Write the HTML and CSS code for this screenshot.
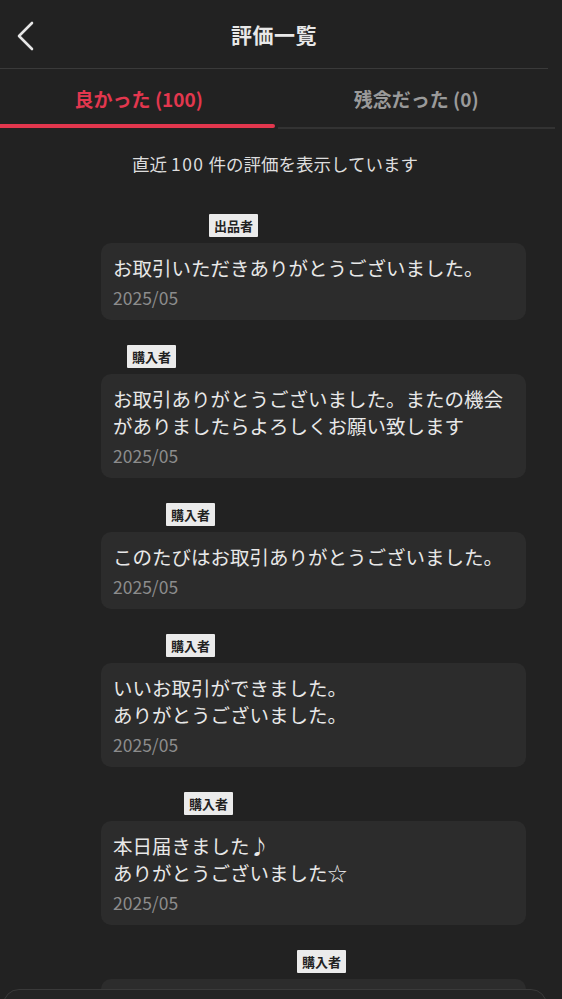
FILE: index.html
```html
<!DOCTYPE html>
<html lang="ja">
<head>
    <meta charset="UTF-8">
    <meta name="viewport" content="width=device-width, initial-scale=1.0">
    <title>評価一覧</title>
    <link rel="stylesheet" href="styles.css">
</head>
<body>

<header class="top-bar">
    <button class="back-btn" aria-label="戻る">
        <svg width="20" height="30" viewBox="0 0 20 30"><polyline points="16,2 3,15 16,28" fill="none" stroke="#e6e6e6" stroke-width="2.6" stroke-linecap="round" stroke-linejoin="round"/></svg>
    </button>
    <h1>評価一覧</h1>
</header>

<nav class="tabs">
    <div class="tab active">良かった (100)</div>
    <div class="tab">残念だった (0)</div>
</nav>

<p class="note">直近<span class="num">100</span>件の評価を表示しています</p>

<div class="review-list">
    <div class="review" style="--offset: 108px">
        <span class="badge">出品者</span>
        <div class="card">
            <p class="msg">お取引いただきありがとうございました。</p>
            <p class="date">2025/05</p>
        </div>
    </div>
    <div class="review" style="--offset: 26px">
        <span class="badge">購入者</span>
        <div class="card">
            <p class="msg">お取引ありがとうございました。またの機会がありましたらよろしくお願い致します</p>
            <p class="date">2025/05</p>
        </div>
    </div>
    <div class="review" style="--offset: 65px">
        <span class="badge">購入者</span>
        <div class="card">
            <p class="msg">このたびはお取引ありがとうございました。</p>
            <p class="date">2025/05</p>
        </div>
    </div>
    <div class="review" style="--offset: 65px">
        <span class="badge">購入者</span>
        <div class="card">
            <p class="msg">いいお取引ができました。<br>ありがとうございました。</p>
            <p class="date">2025/05</p>
        </div>
    </div>
    <div class="review" style="--offset: 83px">
        <span class="badge">購入者</span>
        <div class="card">
            <p class="msg">本日届きました♪<br>ありがとうございました☆</p>
            <p class="date">2025/05</p>
        </div>
    </div>
    <div class="review" style="--offset: 196px">
        <span class="badge">購入者</span>
        <div class="card card-empty"></div>
    </div>
</div>

<div class="bottom-sheet"></div>

</body>
</html>
```

FILE: styles.css
```css
body {
    margin: 0;
    background-color: #222222;
    color: #e6e6e6;
    font-family: "Noto Sans CJK JP", "Noto Sans", sans-serif;
    overflow: hidden;
}
.top-bar {
    position: relative;
    height: 68px;
    margin-right: 14px;
    display: flex;
    align-items: center;
    justify-content: center;
    border-bottom: 1px solid #3a3a3a;
}
.top-bar h1 {
    margin: 0;
    font-size: 21px;
    font-weight: 700;
    color: #e8e8e8;
    letter-spacing: 0.5px;
}
.back-btn {
    position: absolute;
    left: 16px;
    top: 21px;
    padding: 0;
    border: none;
    background: none;
    cursor: pointer;
}
.tabs {
    display: flex;
    margin-right: 7px;
}
.tab {
    flex: 1;
    height: 60px;
    display: flex;
    align-items: center;
    justify-content: center;
    font-size: 19px;
    font-weight: 700;
    color: #9a9a9a;
    border-bottom: 2px solid #333333;
    box-sizing: border-box;
}
.tab.active {
    position: relative;
    color: #e3374e;
    border-bottom: none;
    padding-bottom: 2px;
}
.tab.active::after {
    content: "";
    position: absolute;
    left: 0;
    right: 3px;
    bottom: 1px;
    height: 4px;
    border-radius: 0 2px 2px 0;
    background-color: #e3374e;
}
.note {
    margin: 23px 0 38px;
    text-align: center;
    font-size: 17.5px;
    line-height: 24px;
    color: #dddddd;
    padding-right: 12px;
}
.note .num {
    margin: 0 4px;
    letter-spacing: 1.5px;
}
.review-list {
    padding: 0 36px 0 101px;
}
.review {
    margin-bottom: 25px;
}
.badge {
    display: block;
    width: fit-content;
    margin-left: var(--offset);
    padding: 0 5px;
    height: 23px;
    line-height: 23px;
    font-size: 13px;
    font-weight: 700;
    color: #222222;
    background-color: #ebebeb;
    border-radius: 1px;
}
.card {
    margin-top: 6px;
    padding: 11px 12px 10px;
    border-radius: 10px;
    background-color: #2c2c2c;
}
.card-empty {
    height: 60px;
}
.msg {
    margin: 0;
    font-size: 19.5px;
    line-height: 27px;
    color: #e8e8e8;
}
.date {
    margin: 5px 0 0;
    font-size: 17.5px;
    line-height: 24px;
    color: #8c8c8c;
}
.bottom-sheet {
    position: fixed;
    left: 3px;
    width: 542px;
    top: 989px;
    height: 20px;
    border: 1px solid #3a3a3a;
    border-radius: 16px 16px 0 0;
    background-color: #242424;
}
```
